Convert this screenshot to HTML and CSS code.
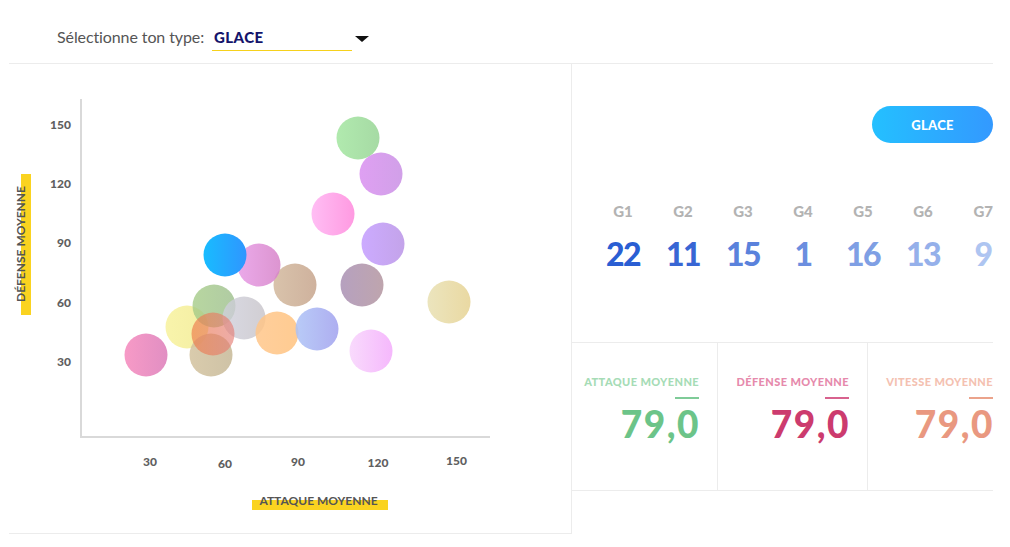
FILE: index.html
```html
<!DOCTYPE html>
<html lang="fr">
<head>
<meta charset="utf-8">
<title>Types</title>
<link rel="stylesheet" href="styles.css">
</head>
<body>
<div class="page">
  <header class="topbar">
    <span class="select-label">Sélectionne ton type:</span>
    <div class="select"><span class="select-value">GLACE</span></div>
    <span class="select-arrow"></span>
  </header>
  <main class="main">
    <section class="chart-panel">
      <svg class="chart" width="562" height="469" viewBox="0 0 562 469" xmlns="http://www.w3.org/2000/svg">
        <defs>
          <linearGradient id="g1"><stop offset="0" stop-color="#a3e6a0"/><stop offset="1" stop-color="#96d494"/></linearGradient>
          <linearGradient id="g2"><stop offset="0" stop-color="#d98ff0"/><stop offset="1" stop-color="#c98fe4"/></linearGradient>
          <linearGradient id="g3"><stop offset="0" stop-color="#ffb2f2"/><stop offset="1" stop-color="#ff88dc"/></linearGradient>
          <linearGradient id="g4"><stop offset="0" stop-color="#c39cff"/><stop offset="1" stop-color="#b993e6"/></linearGradient>
          <linearGradient id="g5"><stop offset="0" stop-color="#d2b89c"/><stop offset="1" stop-color="#c6a48c"/></linearGradient>
          <linearGradient id="g6"><stop offset="0" stop-color="#a990b4"/><stop offset="1" stop-color="#b3959f"/></linearGradient>
          <linearGradient id="g7"><stop offset="0" stop-color="#e8e0b2"/><stop offset="1" stop-color="#e6d292"/></linearGradient>
          <linearGradient id="g8"><stop offset="0" stop-color="#18bcff"/><stop offset="1" stop-color="#2f96ff"/></linearGradient>
          <linearGradient id="g9"><stop offset="0" stop-color="#e79ae6"/><stop offset="1" stop-color="#d682c8"/></linearGradient>
          <linearGradient id="g10"><stop offset="0" stop-color="#a6cc88"/><stop offset="1" stop-color="#9cbe8c"/></linearGradient>
          <linearGradient id="g11"><stop offset="0" stop-color="#cfd0dc"/><stop offset="1" stop-color="#c6c2c8"/></linearGradient>
          <linearGradient id="g12"><stop offset="0" stop-color="#f7f196"/><stop offset="1" stop-color="#f1ea8c"/></linearGradient>
          <linearGradient id="g13"><stop offset="0" stop-color="#ee7a48"/><stop offset="1" stop-color="#e47e78"/></linearGradient>
          <linearGradient id="g14"><stop offset="0" stop-color="#d3c29e"/><stop offset="1" stop-color="#c6b896"/></linearGradient>
          <linearGradient id="g15"><stop offset="0" stop-color="#f68fc0"/><stop offset="1" stop-color="#de82bc"/></linearGradient>
          <linearGradient id="g16"><stop offset="0" stop-color="#ffc68a"/><stop offset="1" stop-color="#ffc27e"/></linearGradient>
          <linearGradient id="g17"><stop offset="0" stop-color="#acc2f6"/><stop offset="1" stop-color="#a0a0ee"/></linearGradient>
          <linearGradient id="g18"><stop offset="0" stop-color="#f8d6fc"/><stop offset="1" stop-color="#f4b0fc"/></linearGradient>
        </defs>

        <rect class="axis-hl" x="12" y="110" width="10" height="141"/>
        <text class="axis-title" transform="translate(16 180) rotate(-90)" text-anchor="middle">DÉFENSE MOYENNE</text>
        <rect class="axis-hl" x="243" y="436" width="136" height="10"/>
        <text class="axis-title" x="309.5" y="441" text-anchor="middle">ATTAQUE MOYENNE</text>

        <line class="axis" x1="72" y1="35" x2="72" y2="374"/>
        <line class="axis" x1="71" y1="373" x2="481" y2="373"/>

        <text class="tick" x="62" y="65" text-anchor="end">150</text>
        <text class="tick" x="62" y="124" text-anchor="end">120</text>
        <text class="tick" x="62" y="183" text-anchor="end">90</text>
        <text class="tick" x="62" y="243" text-anchor="end">60</text>
        <text class="tick" x="62" y="302" text-anchor="end">30</text>

        <text class="tick" x="141" y="402" text-anchor="middle">30</text>
        <text class="tick" x="216" y="404" text-anchor="middle">60</text>
        <text class="tick" x="289" y="402" text-anchor="middle">90</text>
        <text class="tick" x="369" y="403" text-anchor="middle">120</text>
        <text class="tick" x="447.5" y="401" text-anchor="middle">150</text>

        <g class="bubbles">
          <circle cx="349" cy="74" r="21.5" fill="url(#g1)" opacity="0.85"/>
          <circle cx="372" cy="110" r="21.5" fill="url(#g2)" opacity="0.85"/>
          <circle cx="324" cy="150" r="21.5" fill="url(#g3)" opacity="0.85"/>
          <circle cx="374" cy="180" r="21.5" fill="url(#g4)" opacity="0.85"/>
          <circle cx="286" cy="221" r="21.5" fill="url(#g5)" opacity="0.85"/>
          <circle cx="353" cy="221" r="21.5" fill="url(#g6)" opacity="0.85"/>
          <circle cx="440" cy="238" r="21.5" fill="url(#g7)" opacity="0.85"/>
          <circle cx="250" cy="201" r="21.5" fill="url(#g9)" opacity="0.85"/>
          <circle cx="216" cy="191" r="21.5" fill="url(#g8)"/>
          <circle cx="178" cy="263" r="21.5" fill="url(#g12)" opacity="0.8"/>
          <circle cx="205" cy="242" r="21.5" fill="url(#g10)" opacity="0.8"/>
          <circle cx="235" cy="254" r="21.5" fill="url(#g11)" opacity="0.8"/>
          <circle cx="202" cy="291" r="21.5" fill="url(#g14)" opacity="0.85"/>
          <circle cx="204" cy="270" r="21.5" fill="url(#g13)" opacity="0.65"/>
          <circle cx="137" cy="291" r="21.5" fill="url(#g15)" opacity="0.9"/>
          <circle cx="268" cy="269" r="21.5" fill="url(#g16)" opacity="0.85"/>
          <circle cx="308" cy="265" r="21.5" fill="url(#g17)" opacity="0.85"/>
          <circle cx="362" cy="287" r="21.5" fill="url(#g18)" opacity="0.9"/>
        </g>
      </svg>
    </section>

    <section class="info-panel">
      <div class="type-row"><span class="type-badge">GLACE</span></div>
      <div class="gens">
        <div class="gen"><span class="gen-label">G1</span><span class="gen-count gc1">22</span></div>
        <div class="gen"><span class="gen-label">G2</span><span class="gen-count gc2">11</span></div>
        <div class="gen"><span class="gen-label">G3</span><span class="gen-count gc3">15</span></div>
        <div class="gen"><span class="gen-label">G4</span><span class="gen-count gc4">1</span></div>
        <div class="gen"><span class="gen-label">G5</span><span class="gen-count gc5">16</span></div>
        <div class="gen"><span class="gen-label">G6</span><span class="gen-count gc6">13</span></div>
        <div class="gen gen-last"><span class="gen-label">G7</span><span class="gen-count gc7">9</span></div>
      </div>
      <div class="stats">
        <div class="stat stat-atk">
          <span class="stat-label">ATTAQUE MOYENNE</span>
          <span class="stat-rule"></span>
          <span class="stat-value">79,0</span>
        </div>
        <div class="stat stat-def">
          <span class="stat-label">DÉFENSE MOYENNE</span>
          <span class="stat-rule"></span>
          <span class="stat-value">79,0</span>
        </div>
        <div class="stat stat-spd">
          <span class="stat-label">VITESSE MOYENNE</span>
          <span class="stat-rule"></span>
          <span class="stat-value">79,0</span>
        </div>
      </div>
    </section>
  </main>
</div>
</body>
</html>
```

FILE: styles.css
```css
* { box-sizing: border-box; }

body {
  margin: 0;
  background: #ffffff;
  font-family: Lato, "Open Sans", sans-serif;
  color: #555555;
}

.page {
  width: 984px;
  margin-left: 9px;
}

/* ---------- header ---------- */
.topbar {
  height: 64px;
  border-bottom: 1px solid #ececec;
  display: flex;
  align-items: flex-start;
  padding: 27px 0 0 48px;
}

.select-label {
  font-size: 16px;
  line-height: 20px;
  color: #555555;
  letter-spacing: -0.1px;
}

.select {
  margin-left: 8px;
  width: 140px;
  height: 24px;
  border-bottom: 1px solid #f6d11c;
  padding-left: 2px;
}

.select-value {
  font-size: 15px;
  line-height: 20px;
  font-weight: 900;
  color: #14146b;
  letter-spacing: 0.4px;
}

.select-arrow {
  margin: 9px 0 0 3px;
  width: 0;
  height: 0;
  border-left: 7px solid transparent;
  border-right: 7px solid transparent;
  border-top: 6px solid #111111;
}

/* ---------- main ---------- */
.main {
  display: flex;
}

.chart-panel {
  width: 563px;
  height: 470px;
  border-right: 1px solid #ececec;
  border-bottom: 1px solid #ececec;
  flex: none;
}

.chart {
  display: block;
}

.axis {
  stroke: #d9d9d9;
  stroke-width: 2;
}

.axis-hl {
  fill: #fad320;
}

.axis-title {
  font-family: Lato, sans-serif;
  font-size: 12px;
  font-weight: 700;
  fill: #555555;
}

.tick {
  font-family: Lato, sans-serif;
  font-size: 12px;
  font-weight: 900;
  fill: #606060;
}

/* ---------- info panel ---------- */
.info-panel {
  flex: 1;
  min-width: 0;
  height: 470px;
}

.type-row {
  display: flex;
  justify-content: flex-end;
  padding-top: 42px;
}

.type-badge {
  width: 121px;
  height: 37px;
  border-radius: 19px;
  background: linear-gradient(to right, #24c0ff, #3399ff);
  color: #ffffff;
  font-size: 13px;
  font-weight: 900;
  letter-spacing: 0.3px;
  display: flex;
  align-items: center;
  justify-content: center;
}

.gens {
  display: flex;
  padding-left: 21px;
  margin-top: 59px;
}

.gen {
  flex: none;
  width: 60px;
  display: flex;
  flex-direction: column;
  align-items: center;
}

.gen-last {
  width: 40px;
  align-items: flex-end;
}

.gen-label {
  font-size: 15px;
  line-height: 18px;
  font-weight: 900;
  color: #b3b3b3;
}

.gen-count {
  margin-top: 18px;
  font-size: 32px;
  line-height: 32px;
  font-weight: 900;
  letter-spacing: -1.5px;
}

.gen-last .gen-count { letter-spacing: 0; }

.gc1 { color: #2a5ed3; }
.gc2 { color: #3866d4; }
.gc3 { color: #5a82dc; }
.gc4 { color: #6b8edf; }
.gc5 { color: #7f9fe4; }
.gc6 { color: #95b0ea; }
.gc7 { color: #aec5f1; }

.stats {
  display: flex;
  margin-top: 72px;
  height: 149px;
  border-top: 1px solid #ececec;
  border-bottom: 1px solid #ececec;
}

.stat {
  flex: none;
  width: 150px;
  display: flex;
  flex-direction: column;
  align-items: flex-end;
  padding: 32px 18px 0 0;
  border-left: 1px solid #ececec;
}

.stat:first-child {
  width: 145px;
  border-left: none;
}

.stat:last-child {
  flex: 1;
  width: auto;
  min-width: 0;
  padding-right: 0;
}

.stat-label {
  font-size: 11px;
  line-height: 14px;
  font-weight: 900;
  letter-spacing: 0.4px;
  white-space: nowrap;
}

.stat-rule {
  margin-top: 8px;
  width: 24px;
  height: 2px;
}

.stat-value {
  margin-top: 5px;
  font-size: 37px;
  line-height: 40px;
  font-weight: 900;
  letter-spacing: 1.5px;
  margin-right: -1px;
}

.stat-atk .stat-label { color: #a6dcb6; }
.stat-atk .stat-rule { background: #7fcb98; }
.stat-atk .stat-value { color: #6cc489; }

.stat-def .stat-label { color: #e68aac; }
.stat-def .stat-rule { background: #d8628e; }
.stat-def .stat-value { color: #cc3b6e; }

.stat-spd .stat-label { color: #f4c1b1; }
.stat-spd .stat-rule { background: #eba38b; }
.stat-spd .stat-value { color: #e99880; }
```
